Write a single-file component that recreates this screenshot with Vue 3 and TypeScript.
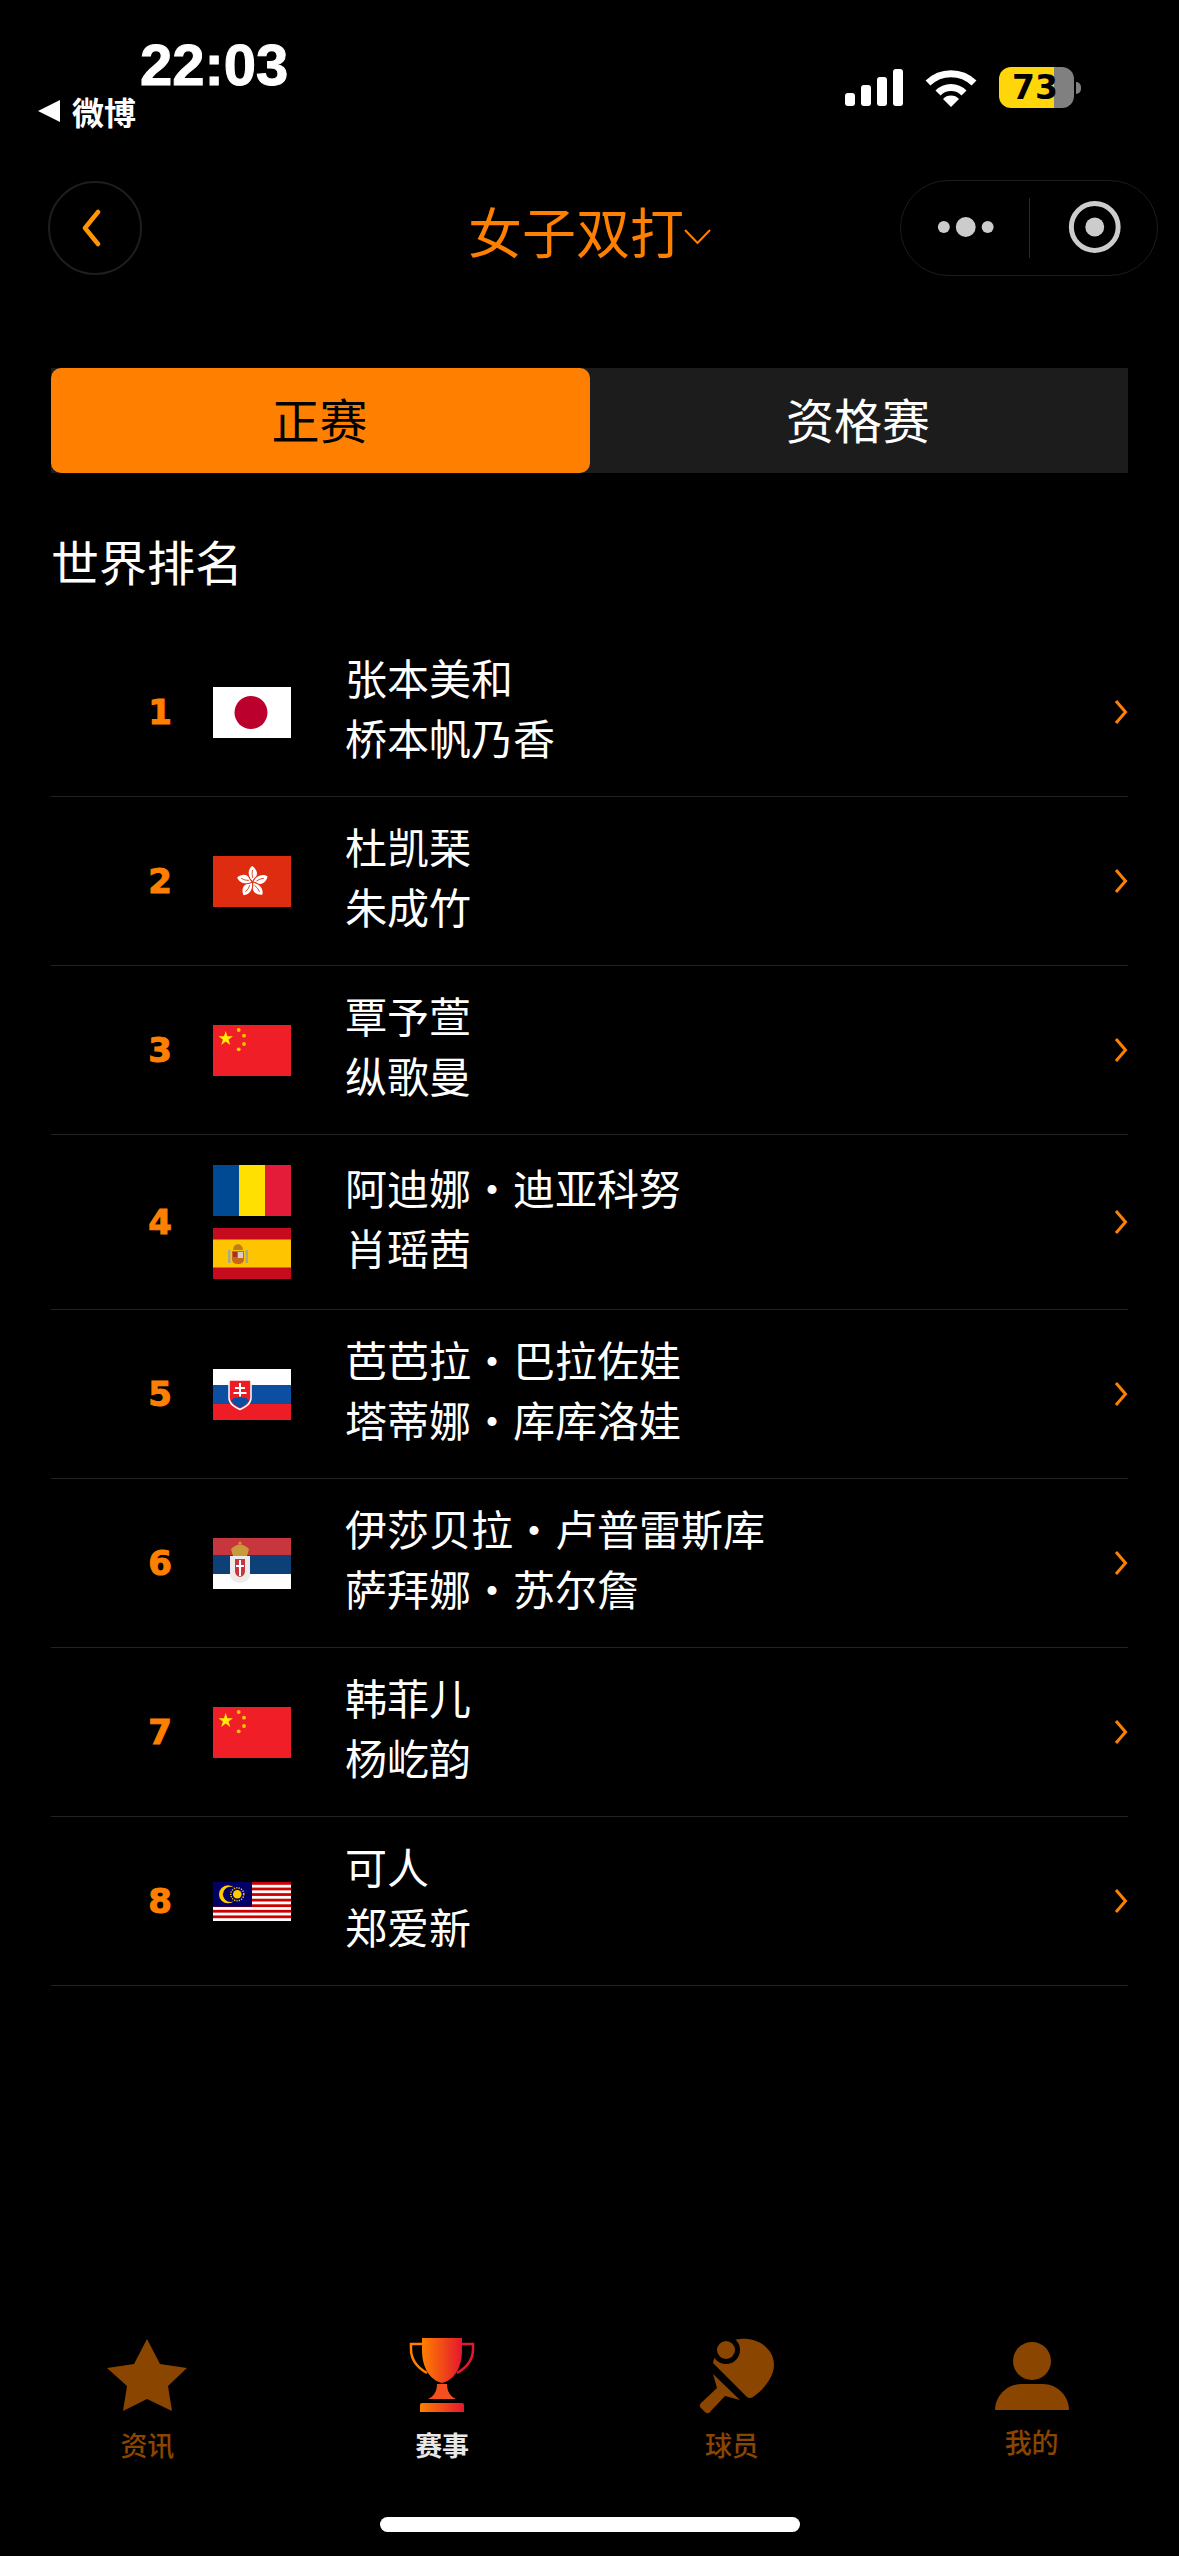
<template>
  <div class="page">
    <div class="status-bar">
      <div class="status-left">
        <div class="time">22:03</div>
        <div class="back-app"><span class="back-tri"></span>微博</div>
      </div>
      <div class="status-right">
        <svg class="signal" width="58" height="37" viewBox="0 0 58 37">
          <rect x="0" y="24" width="10" height="13" rx="3" />
          <rect x="16" y="16" width="10" height="21" rx="3" />
          <rect x="32" y="8" width="10" height="29" rx="3" />
          <rect x="48" y="0" width="10" height="37" rx="3" />
        </svg>
        <svg class="wifi" width="52" height="38" viewBox="0 0 52 38">
          <path d="M3 14 A33 33 0 0 1 49 14" fill="none" stroke="#fff" stroke-width="7" />
          <path d="M13 24 A18 18 0 0 1 39 24" fill="none" stroke="#fff" stroke-width="7" />
          <path d="M18 30 A11 11 0 0 1 34 30 L26 38 Z" fill="#fff" />
        </svg>
        <div class="battery">
          <div class="battery-body"><span class="battery-num">73</span></div>
          <span class="battery-cap"></span>
        </div>
      </div>
    </div>

    <div class="nav">
      <button class="back-btn">
        <svg width="26" height="38" viewBox="0 0 26 38">
          <path d="M20 3 L7 19 L20 35" fill="none" stroke="#ff9500" stroke-width="4.500" stroke-linecap="round" stroke-linejoin="round" />
        </svg>
      </button>
      <div class="title">女子双打<svg class="title-arrow" width="27" height="15" viewBox="0 0 27 15"><path d="M1 1 L13.5 14 L26 1" fill="none" stroke="#ff8000" stroke-width="2" /></svg></div>
      <div class="capsule">
        <svg width="128" height="60" viewBox="0 0 128 60">
          <circle cx="43" cy="29" r="6" fill="#ccc" />
          <circle cx="65" cy="29" r="10" fill="#ccc" />
          <circle cx="87" cy="29" r="6" fill="#ccc" />
        </svg>
        <span class="capsule-line"></span>
        <svg width="128" height="60" viewBox="0 0 128 60">
          <circle cx="65" cy="29" r="23.500" fill="none" stroke="#ccc" stroke-width="5" />
          <circle cx="65" cy="29" r="9.500" fill="#ccc" />
        </svg>
      </div>
    </div>

    <div class="tabs">
      <div class="tab active">正赛</div>
      <div class="tab">资格赛</div>
    </div>

    <h2 class="heading">世界排名</h2>

    <div class="list">
      <div v-for="row in rows" :key="row.rank" class="row">
        <div class="rank">{{ row.rank }}</div>
        <div class="flags">
          <template v-for="flag in row.flags" :key="flag">
            <svg v-if="flag === 'jp'" class="flag" viewBox="0 0 78 51">
              <rect width="78" height="51" fill="#fff" />
              <circle cx="38" cy="25.500" r="16.500" fill="#bc002d" />
            </svg>
            <svg v-else-if="flag === 'hk'" class="flag" viewBox="0 0 78 51">
              <rect width="78" height="51" fill="#de2c10" />
              <g v-for="a in petals" :key="a" :transform="`rotate(${a} 39.5 26)`">
                <path d="M39.500 25 C35 21 34 14 39 10 C44 13 46 19 41.500 22 Q40 23.500 39.500 25 Z" fill="#fff" />
                <path d="M39.500 14 Q38.500 18 39.800 22" fill="none" stroke="#de2c10" stroke-width="0.800" />
              </g>
            </svg>
            <svg v-else-if="flag === 'cn'" class="flag" viewBox="0 0 78 51">
              <rect width="78" height="51" fill="#f01f27" />
              <polygon points="12.700,6 14.400,11.200 20,11.200 15.500,14.500 17.200,20 12.700,16.600 8.200,20 9.900,14.500 5.400,11.200 11,11.200" fill="#ffee00" />
              <circle cx="25.700" cy="5" r="1.900" fill="#ffc800" />
              <circle cx="31" cy="10.700" r="1.900" fill="#ffc800" />
              <circle cx="31" cy="19" r="1.900" fill="#ffc800" />
              <circle cx="25.700" cy="24.300" r="1.900" fill="#ffc800" />
            </svg>
            <svg v-else-if="flag === 'ro'" class="flag" viewBox="0 0 78 51">
              <rect width="26" height="51" fill="#004a94" />
              <rect x="26" width="26" height="51" fill="#ffe000" />
              <rect x="52" width="26" height="51" fill="#e51b3a" />
            </svg>
            <svg v-else-if="flag === 'es'" class="flag" viewBox="0 0 78 51">
              <rect width="78" height="51" fill="#c60b1e" />
              <rect y="11.500" width="78" height="28" fill="#ffc400" />
              <rect x="15" y="22" width="2.500" height="13" fill="#a8a890" />
              <rect x="32.500" y="22" width="2.500" height="13" fill="#a8a890" />
              <path d="M19 23 H31 V31 Q31 36 25 36 Q19 36 19 31 Z" fill="#c8661a" />
              <path d="M20 22 Q20 17 25 16 Q30 17 30 22 Z" fill="#b8801c" />
              <rect x="25" y="24" width="5" height="6" fill="#d9c9c9" />
              <rect x="20" y="24" width="4" height="5" fill="#a83020" />
            </svg>
            <svg v-else-if="flag === 'sk'" class="flag" viewBox="0 0 78 51">
              <rect width="78" height="51" fill="#fff" />
              <rect y="16" width="78" height="19" fill="#0b4ea2" />
              <rect y="35" width="78" height="16" fill="#ee1c25" />
              <path d="M16 11 H38 V29 C38 35 32 38 27 40.500 C22 38 16 35 16 29 Z" fill="#ee1c25" stroke="#fff" stroke-width="1.500" />
              <path d="M27 14 V30 M22 19 H32 M20.500 24 H33.500" stroke="#fff" stroke-width="2" fill="none" />
              <path d="M18 32 Q21 27 24 29 Q27 26 30 29 Q33 27 36 32 Q32 37 27 39 Q22 37 18 32 Z" fill="#0b4ea2" />
            </svg>
            <svg v-else-if="flag === 'rs'" class="flag" viewBox="0 0 78 51">
              <rect width="78" height="17" fill="#c6363c" />
              <rect y="17" width="78" height="19" fill="#0c4076" />
              <rect y="36" width="78" height="15" fill="#fff" />
              <path d="M18 11 Q27 2 36 11 L34 18 H20 Z" fill="#c89a3c" />
              <circle cx="27" cy="5" r="1.500" fill="#c89a3c" />
              <path d="M17 18 H37 V36 Q37 44 27 45 Q17 44 17 36 Z" fill="#efeaea" />
              <path d="M22 21 H32 V33 Q32 38 27 39 Q22 38 22 33 Z" fill="#c6363c" />
              <path d="M27 22 V38 M23 28 H31" stroke="#fff" stroke-width="2" fill="none" />
            </svg>
            <svg v-else-if="flag === 'my'" class="flag my" viewBox="0 0 78 39">
              <rect width="78" height="39" fill="#fff" />
              <rect v-for="i in 7" :key="i" :y="(i - 1) * 5.57" width="78" height="2.790" fill="#cc0001" />
              <rect width="39" height="24.700" fill="#010066" />
              <circle cx="15" cy="12.300" r="9" fill="#ffcc00" />
              <circle cx="17.500" cy="12.300" r="7.600" fill="#010066" />
              <circle cx="24.300" cy="12.300" r="4.300" fill="#ffcc00" />
              <circle cx="24.300" cy="12.300" r="6.500" fill="none" stroke="#ffcc00" stroke-width="1.500" stroke-dasharray="1.200 1.200" />
            </svg>
          </template>
        </div>
        <div class="names">
          <div v-for="name in row.names" :key="name" class="name">{{ name }}</div>
        </div>
        <svg class="row-arrow" width="14" height="28" viewBox="0 0 14 28">
          <path d="M2 3 L11.500 14 L2 25" fill="none" stroke="#ff8000" stroke-width="3" />
        </svg>
      </div>
    </div>

    <div class="tabbar">
      <div class="tabbar-item">
        <svg class="tabbar-icon" width="80" height="80" viewBox="0 -3 80 80">
          <polygon points="40,0 53,25 80,29 61,47 65,72 40,60 16,72 20,47 0,29 27,25" fill="#8a4500" />
        </svg>
        <span class="tabbar-label">资讯</span>
      </div>
      <div class="tabbar-item">
        <svg class="tabbar-icon" width="68" height="80" viewBox="0 0 68 80">
          <defs>
            <linearGradient id="cup" x1="0" y1="0" x2="1" y2="0">
              <stop offset="0" stop-color="#ff7f00" />
              <stop offset="1" stop-color="#e4172f" />
            </linearGradient>
          </defs>
          <path d="M14 2 H54 V14 C54 32 46 44 34 47 C22 44 14 32 14 14 Z" fill="url(#cup)" />
          <path d="M14 8 H3 V13 C3 24 10 32 19 37" fill="none" stroke="#ff7f00" stroke-width="2.500" />
          <path d="M54 8 H65 V13 C65 24 58 32 49 37" fill="none" stroke="#e4172f" stroke-width="2.500" />
          <path d="M29 48 H39 C39 56 43 61 48 63 H20 C25 61 29 56 29 48 Z" fill="#f4501f" />
          <path d="M12 69 Q12 67 14 67 H54 Q56 67 56 69 V76 H12 Z" fill="url(#cup)" />
        </svg>
        <span class="tabbar-label current">赛事</span>
      </div>
      <div class="tabbar-item">
        <svg class="tabbar-icon" width="80" height="80" viewBox="0 0 80 80">
          <path d="M43 3 C60 1 77 12 77 29 C77 42 65 55 56 61 Q53 63 50 61 L16 27 C18 15 30 4 43 3 Z" fill="#8a4500" />
          <circle cx="29" cy="14" r="14" fill="#000" />
          <circle cx="29" cy="14" r="9" fill="#8a4500" />
          <path d="M16 38 L43 64 L28 60 L12 77 Q10 78 8 76 L3 71 Q2 69 4 67 L20 52 Z" fill="#8a4500" />
        </svg>
        <span class="tabbar-label shifted">球员</span>
      </div>
      <div class="tabbar-item">
        <svg class="tabbar-icon" width="74" height="80" viewBox="0 -5 74 80">
          <circle cx="37" cy="20" r="19" fill="#8a4500" />
          <path d="M0 69 C0 55 12 43 26 43 H48 C62 43 74 55 74 69 Z" fill="#8a4500" />
        </svg>
        <span class="tabbar-label mine">我的</span>
      </div>
    </div>
    <div class="home-bar"></div>
  </div>
</template>

<script setup lang="ts">
interface RankRow {
  rank: number;
  flags: string[];
  names: string[];
}

const petals = [0, 72, 144, 216, 288];

const rows: RankRow[] = [
  { rank: 1, flags: ['jp'], names: ['张本美和', '桥本帆乃香'] },
  { rank: 2, flags: ['hk'], names: ['杜凯琹', '朱成竹'] },
  { rank: 3, flags: ['cn'], names: ['覃予萱', '纵歌曼'] },
  { rank: 4, flags: ['ro', 'es'], names: ['阿迪娜·迪亚科努', '肖瑶茜'] },
  { rank: 5, flags: ['sk'], names: ['芭芭拉·巴拉佐娃', '塔蒂娜·库库洛娃'] },
  { rank: 6, flags: ['rs'], names: ['伊莎贝拉·卢普雷斯库', '萨拜娜·苏尔詹'] },
  { rank: 7, flags: ['cn'], names: ['韩菲儿', '杨屹韵'] },
  { rank: 8, flags: ['my'], names: ['可人', '郑爱新'] }
];
</script>

<style>
html,
body {
  margin: 0;
  background: #000;
}
</style>

<style scoped>
.page {
  width: 1179px;
  height: 2556px;
  background: #000;
  color: #fff;
  display: flex;
  flex-direction: column;
  position: relative;
  overflow: hidden;
  font-family: "Noto Sans CJK SC", "Liberation Sans", sans-serif;
}

.status-bar {
  height: 180px;
  display: flex;
  justify-content: space-between;
  box-sizing: border-box;
  padding: 36px 98px 0 38px;
}

.time {
  margin-left: 102px;
  font-family: "Liberation Sans", sans-serif;
  font-weight: 700;
  font-size: 58px;
  line-height: 58px;
  -webkit-text-stroke: 1px #fff;
}

.back-app {
  display: flex;
  align-items: center;
  gap: 12px;
  font-size: 32px;
  font-weight: 700;
  line-height: 34px;
}

.back-tri {
  width: 0;
  height: 0;
  border-top: 11px solid transparent;
  border-bottom: 11px solid transparent;
  border-right: 22px solid #fff;
}

.status-right {
  display: flex;
  align-items: flex-start;
  gap: 22px;
  padding-top: 33px;
}

.signal {
  fill: #fff;
}

.battery {
  display: flex;
  align-items: center;
  gap: 2px;
  margin-top: -2px;
}

.battery-body {
  width: 75px;
  height: 41px;
  border-radius: 12px;
  background: linear-gradient(90deg, #ffd60a 0 55px, #808080 55px);
  box-sizing: border-box;
  padding-left: 13px;
}

.battery-num {
  font-family: "DejaVu Sans", sans-serif;
  font-weight: 700;
  font-size: 33px;
  line-height: 41px;
  color: #000;
  display: block;
}

.battery-cap {
  width: 5px;
  height: 12px;
  border-radius: 0 6px 6px 0;
  background: #808080;
}

.nav {
  height: 96px;
  display: grid;
  grid-template-columns: 1fr auto 1fr;
  align-items: center;
  padding: 0 21px;
}

.back-btn {
  width: 94px;
  height: 94px;
  margin-left: 27px;
  border-radius: 50%;
  border: 2px solid #1e1e1e;
  background: #000;
  padding: 0 8px 0 0;
  display: flex;
  align-items: center;
  justify-content: center;
}

.title {
  color: #ff8000;
  font-size: 54px;
  line-height: 60px;
  padding-top: 6px;
  display: flex;
  align-items: center;
}

.title-arrow {
  margin-top: 10px;
}

.capsule {
  justify-self: end;
  width: 258px;
  height: 96px;
  box-sizing: border-box;
  border: 1px solid #1c1c1c;
  border-radius: 48px;
  display: flex;
  align-items: center;
}

.capsule-line {
  width: 1px;
  height: 60px;
  background: #2a2a2a;
}

.tabs {
  margin: 92px 51px 0;
  display: grid;
  grid-template-columns: 539px 1fr;
  height: 105px;
  background: #1c1c1c;
}

.tab {
  display: flex;
  align-items: center;
  justify-content: center;
  box-sizing: border-box;
  padding: 0 2px 6px 0;
  font-size: 48px;
  color: #fff;
}

.tab.active {
  background: #ff8000;
  color: #000;
  border-radius: 10px;
}

.heading {
  margin: 53px 51px 0;
  font-size: 48px;
  font-weight: 400;
  line-height: 68px;
}

.list {
  margin: 34px 51px 0;
}

.row {
  display: flex;
  align-items: center;
  min-height: 168px;
  border-bottom: 1px solid #222;
}

.rank {
  width: 162px;
  box-sizing: border-box;
  padding-right: 41px;
  text-align: right;
  font-family: "DejaVu Sans", sans-serif;
  font-weight: 700;
  font-size: 34px;
  color: #ff8000;
  -webkit-text-stroke: 1px #ff8000;
}

.flags {
  width: 78px;
  display: flex;
  flex-direction: column;
  gap: 12px;
  padding: 30px 0;
}

.flag {
  display: block;
  width: 78px;
  height: 51px;
}

.flag.my {
  height: 39px;
}

.names {
  flex: 1;
  margin-left: 54px;
  padding-bottom: 10px;
}

.name {
  font-size: 42px;
  line-height: 60px;
}

.row-arrow {
  display: block;
}

.tabbar {
  position: absolute;
  left: 0;
  right: 0;
  top: 2336px;
  display: grid;
  grid-template-columns: repeat(4, 1fr);
}

.tabbar-item {
  display: flex;
  flex-direction: column;
  align-items: center;
}

.tabbar-icon {
  display: block;
}

.tabbar-label {
  font-size: 27px;
  font-weight: 500;
  line-height: 36px;
  margin-top: 11px;
  color: #8a4500;
}

.tabbar-label.current {
  color: #e8e8e8;
  font-weight: 700;
}

.tabbar-label.shifted {
  margin-right: 10px;
}

.tabbar-label.mine {
  margin-top: 8px;
}

.home-bar {
  position: absolute;
  left: 380px;
  top: 2517px;
  width: 420px;
  height: 15px;
  border-radius: 8px;
  background: #fff;
}
</style>
